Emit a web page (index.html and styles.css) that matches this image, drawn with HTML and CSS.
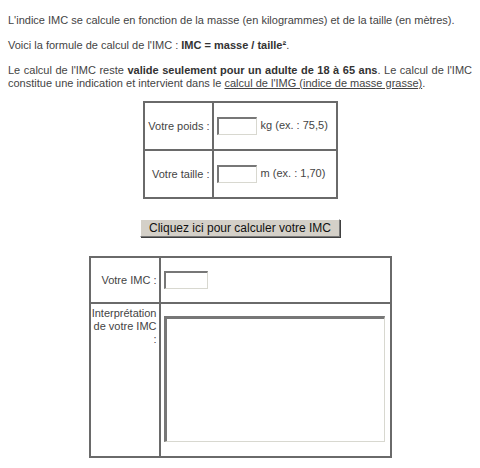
FILE: index.html
```html
<!doctype html>
<html>
    <head>
        <link rel="stylesheet" href="styles.css">
    </head>
    <body>
        <p>L'indice IMC se calcule en fonction de la masse (en kilogrammes) et de la taille (en mètres).</p>

        <p>Voici la formule de calcul de l'IMC : <b>IMC = masse / taille²</b>.</p>

        <p class="justify">
            Le calcul de l'IMC reste <b>valide seulement pour un adulte de 18 à 65 ans</b>.
            Le calcul de l'IMC constitue une indication et intervient dans le
            <a href="#">calcul de l'IMG (indice de masse grasse)</a>.
        </p>

        <form id="imc-form">
            <table class="grid entry">
                <tr>
                    <td class="label">Votre poids :</td>
                    <td class="field">
                        <input type="text" class="small-input" name="poids" />
                        kg (ex. : 75,5)
                    </td>
                </tr>
                <tr>
                    <td class="label">Votre taille :</td>
                    <td class="field">
                        <input type="text" class="small-input" name="taille" />
                        m (ex. : 1,70)
                    </td>
                </tr>
            </table>

            <div class="actions">
                <input type="button" id="calculate" value="Cliquez ici pour calculer votre IMC" />
            </div>

            <table class="grid result">
                <tr class="imc-row">
                    <td class="label">Votre IMC :</td>
                    <td class="field">
                        <input type="text" class="imc-input" name="imc" />
                    </td>
                </tr>
                <tr class="interp-row">
                    <td class="label top">Interprétation de votre IMC :</td>
                    <td class="field top">
                        <textarea id="interpretation"></textarea>
                    </td>
                </tr>
            </table>
        </form>
    </body>
</html>
```

FILE: styles.css
```css
body {
    margin: 0;
    padding: 0 8px;
    font-family: "Liberation Sans", Arial, sans-serif;
    font-size: 11px;
    line-height: 13px;
    color: #444;
}
p {
    margin: 12px 0;
}
p:first-child {
    margin-top: 14px;
}
.justify {
    text-align: justify;
    margin-bottom: 11px;
}
b {
    color: #333;
}
a {
    color: #444;
    text-decoration: underline;
}
form {
    margin: 0;
}

.grid {
    border-collapse: separate;
    border-spacing: 0;
    border: 1px solid #6a6a6a;
    margin: 0 auto;
}
.grid td {
    border: 1px solid #6a6a6a;
    padding: 0;
}
.label {
    text-align: right;
    padding-right: 2px !important;
}
.top {
    vertical-align: top;
}

/* weight / height */
.entry {
    width: 195px;
}
.entry tr {
    height: 48px;
}
.entry .label {
    width: 65px;
}
.entry .field {
    padding-left: 3px !important;
}
.small-input {
    box-sizing: border-box;
    width: 40px;
    height: 18px;
    margin: 0 1px 0 0;
    vertical-align: middle;
    border: 1px solid #d8d8d0;
    border-top: 2px solid #777;
    border-left: 2px solid #777;
    font: inherit;
}

.actions {
    text-align: center;
    padding: 20px 0 19px;
}
#calculate {
    box-sizing: border-box;
    width: 200px;
    height: 18px;
    padding: 0;
    font-family: "Liberation Sans", Arial, sans-serif;
    font-size: 12px;
    color: #111;
    background: #d4d0c8;
    border: 1px solid;
    border-color: #fff #777 #777 #fff;
    box-shadow: 1px 1px 0 #404040;
}

/* result */
.result {
    width: 303px;
}
.result .label {
    width: 66px;
}
.imc-row {
    height: 46px;
}
.interp-row {
    height: 154px;
}
.result .field {
    padding-left: 3px !important;
}
.interp-row .label {
    padding-top: 3px !important;
}
.interp-row .field {
    padding-top: 12px !important;
}
.imc-input {
    box-sizing: border-box;
    width: 44px;
    height: 18px;
    margin: 0;
    vertical-align: middle;
    border: 1px solid #d8d8d0;
    border-top: 2px solid #777;
    border-left: 2px solid #777;
    font: inherit;
}
#interpretation {
    display: block;
    box-sizing: border-box;
    width: 221px;
    height: 126px;
    margin: 0;
    resize: none;
    border: 1px solid #d8d8d0;
    border-top: 3px solid #777;
    border-left: 3px solid #777;
    font: inherit;
}
```
